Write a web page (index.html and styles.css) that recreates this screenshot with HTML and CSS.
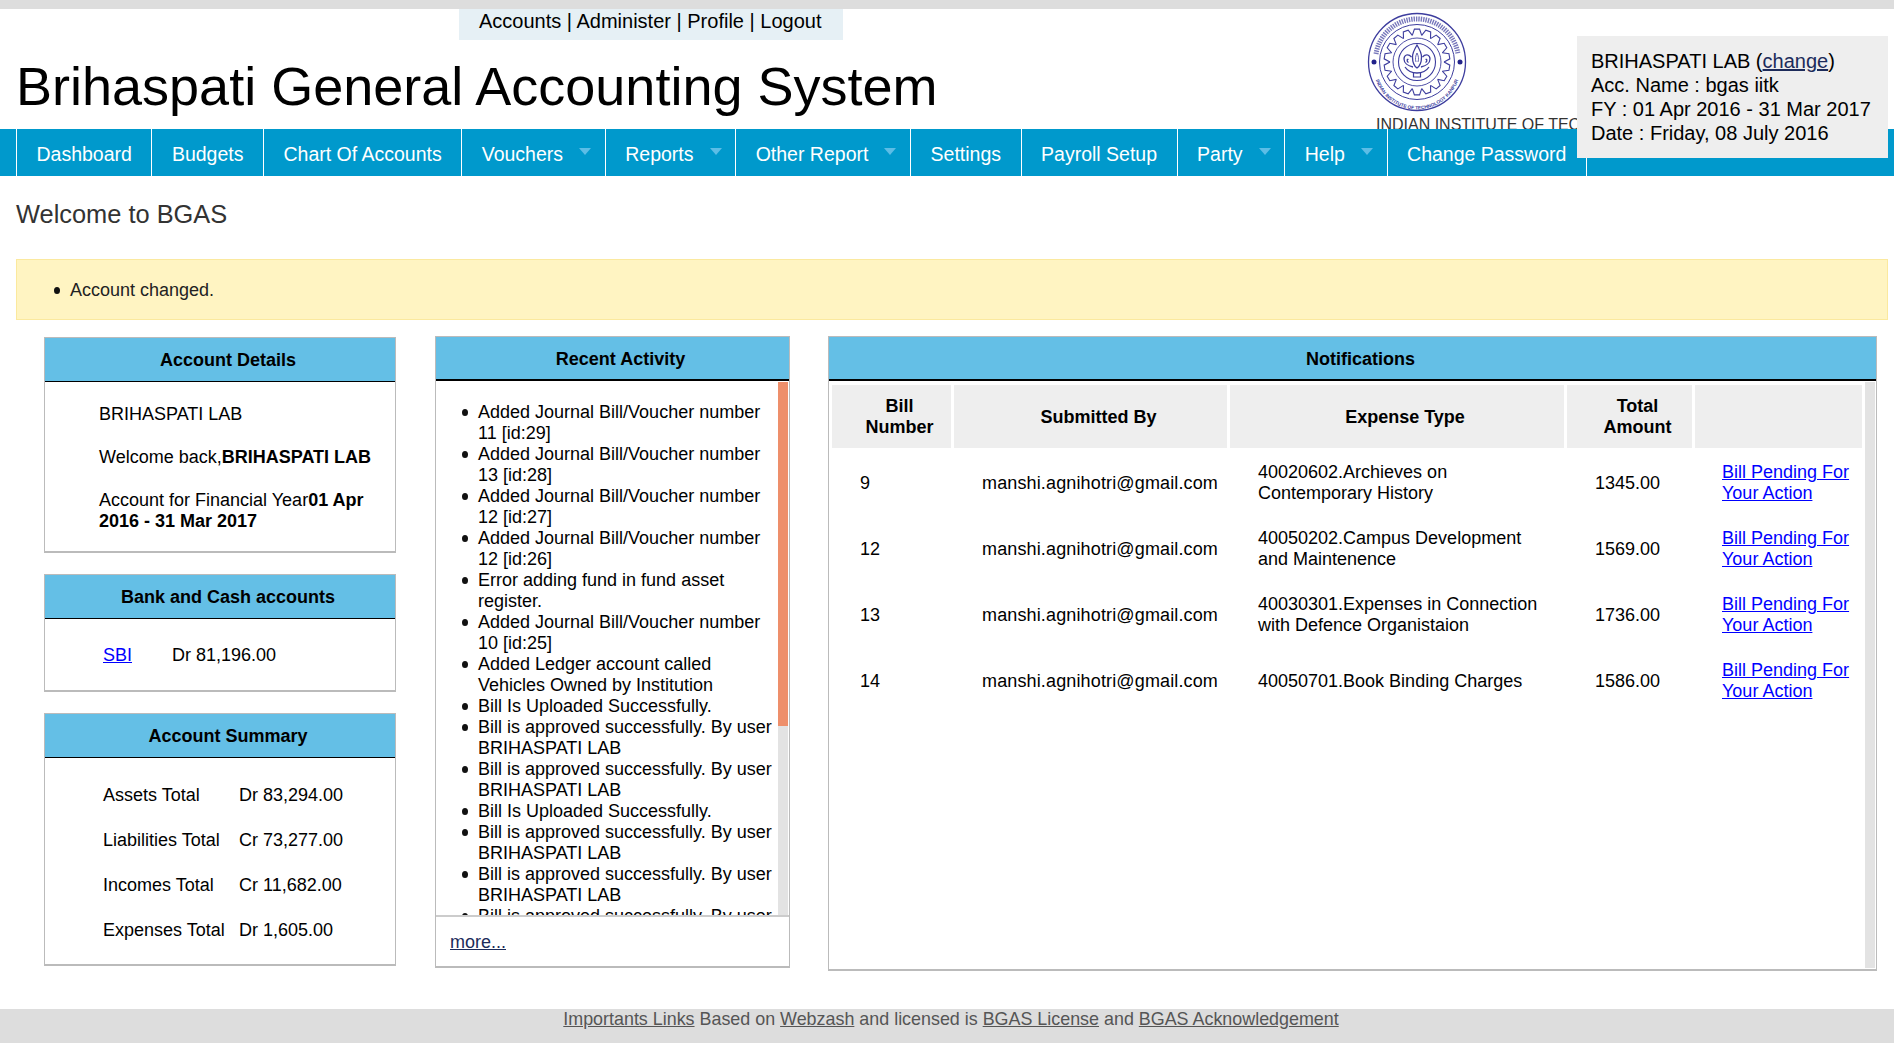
FILE: index.html
```html
<!DOCTYPE html>
<html lang="en">
<head>
  <meta charset="UTF-8" />
  <title>Brihaspati General Accounting System</title>
  <link rel="stylesheet" href="styles.css">
</head>
<body>
  <header class="site-header">
    <div class="brand">
      <div class="top-links">
        <a href="#">Accounts</a> | <a href="#">Administer</a> | <a href="#">Profile</a> | <a href="#">Logout</a>
      </div>
      <h1>Brihaspati General Accounting System</h1>
    </div>
    <div class="institute">
      <svg class="logo" width="100" height="100" viewBox="0 0 100 100" role="img" aria-label="IIT Kanpur logo">
        <defs>
          <path id="ringBottom" d="M6.500 54 A43.500 43.500 0 0 0 93.500 54" />
          <path id="gearTooth" d="M45.310 23.410 L47.410 17.100 L52.590 17.100 L54.690 23.410" />
        </defs>
        <g fill="none" stroke="#3d3d9e">
          <circle cx="50" cy="50" r="48.500" stroke-width="1.300" />
          <circle cx="50" cy="50" r="37.500" stroke-width="1" />
          <path d="M9 42 A41.500 41.500 0 0 1 91 42" stroke-width="5" stroke-dasharray="1.400 1" opacity="0.7" />
          <g stroke-width="1.100">
            <use href="#gearTooth" />
            <use href="#gearTooth" transform="rotate(20 50 50)" />
            <use href="#gearTooth" transform="rotate(40 50 50)" />
            <use href="#gearTooth" transform="rotate(60 50 50)" />
            <use href="#gearTooth" transform="rotate(80 50 50)" />
            <use href="#gearTooth" transform="rotate(100 50 50)" />
            <use href="#gearTooth" transform="rotate(120 50 50)" />
            <use href="#gearTooth" transform="rotate(140 50 50)" />
            <use href="#gearTooth" transform="rotate(160 50 50)" />
            <use href="#gearTooth" transform="rotate(180 50 50)" />
            <use href="#gearTooth" transform="rotate(200 50 50)" />
            <use href="#gearTooth" transform="rotate(220 50 50)" />
            <use href="#gearTooth" transform="rotate(240 50 50)" />
            <use href="#gearTooth" transform="rotate(260 50 50)" />
            <use href="#gearTooth" transform="rotate(280 50 50)" />
            <use href="#gearTooth" transform="rotate(300 50 50)" />
            <use href="#gearTooth" transform="rotate(320 50 50)" />
            <use href="#gearTooth" transform="rotate(340 50 50)" />
          </g>
          <circle cx="50" cy="50" r="24" stroke-width="0.900" />
          <circle cx="50" cy="50" r="18.500" stroke-width="1.100" />
          <path d="M50 33 C47 38 45.500 41 45.500 45 C45.500 50 47 54 50 56 C53 54 54.500 50 54.500 45 C54.500 41 53 38 50 33 Z" stroke-width="1.300" />
          <path d="M50 41 C48.500 44 48 47 49 50 M50 41 C51.500 44 52 47 51 50" stroke-width="0.800" />
          <path d="M44.500 45 C41 41 37 43 37 47 C37 51 41 54 46 55 M41.500 47.500 C40 46.500 39.500 49.500 41.500 50.500 M55.500 45 C59 41 63 43 63 47 C63 51 59 54 54 55 M58.500 47.500 C60 46.500 60.500 49.500 58.500 50.500" stroke-width="1.300" />
          <path d="M38 55 C41 59.500 45 61 50 61 C55 61 59 59.500 62 55" stroke-width="1.300" />
          <path d="M46.500 61 L46.500 65 L53.500 65 L53.500 61" stroke-width="1.200" />
        </g>
        <circle cx="7" cy="50" r="2.500" fill="#22228a" />
        <circle cx="93" cy="50" r="2.500" fill="#22228a" />
        <text class="logo-ring-text"><textPath href="#ringBottom" startOffset="50%" text-anchor="middle">INDIAN INSTITUTE OF TECHNOLOGY KANPUR</textPath></text>
      </svg>
      <div class="institute-name">INDIAN INSTITUTE OF TECHNOLOGY KANPUR</div>
    </div>
    <div class="account-box">
      BRIHASPATI LAB (<a href="#">change</a>)<br>
      Acc. Name : bgas iitk<br>
      FY : 01 Apr 2016 - 31 Mar 2017<br>
      Date : Friday, 08 July 2016
    </div>
  </header>

  <nav class="main-nav">
    <a href="#">Dashboard</a>
    <a href="#">Budgets</a>
    <a href="#">Chart Of Accounts</a>
    <a href="#" class="has-menu">Vouchers</a>
    <a href="#" class="has-menu">Reports</a>
    <a href="#" class="has-menu">Other Report</a>
    <a href="#">Settings</a>
    <a href="#">Payroll Setup</a>
    <a href="#" class="has-menu">Party</a>
    <a href="#" class="has-menu">Help</a>
    <a href="#">Change Password</a>
  </nav>

  <main class="content">
    <h2 class="page-title">Welcome to BGAS</h2>

    <div class="alert">
      <ul><li>Account changed.</li></ul>
    </div>

    <div class="dashboard">
      <div class="left-col">
        <section class="panel details-panel">
          <h3>Account Details</h3>
          <div class="panel-body">
            <p>BRIHASPATI LAB</p>
            <p>Welcome back,<b>BRIHASPATI LAB</b></p>
            <p>Account for Financial Year<b>01 Apr 2016 - 31 Mar 2017</b></p>
          </div>
        </section>

        <section class="panel bank-panel">
          <h3>Bank and Cash accounts</h3>
          <table class="plain-table">
            <tr><td class="bank-name"><a href="#">SBI</a></td><td>Dr 81,196.00</td></tr>
          </table>
        </section>

        <section class="panel summary-panel">
          <h3>Account Summary</h3>
          <table class="plain-table">
            <tr><td>Assets Total</td><td>Dr 83,294.00</td></tr>
            <tr><td>Liabilities Total</td><td>Cr 73,277.00</td></tr>
            <tr><td>Incomes Total</td><td>Cr 11,682.00</td></tr>
            <tr><td>Expenses Total</td><td>Dr 1,605.00</td></tr>
          </table>
        </section>
      </div>

      <section class="panel activity-panel">
        <h3>Recent Activity</h3>
        <div class="activity-scroll">
          <ul>
            <li>Added Journal Bill/Voucher number 11 [id:29]</li>
            <li>Added Journal Bill/Voucher number 13 [id:28]</li>
            <li>Added Journal Bill/Voucher number 12 [id:27]</li>
            <li>Added Journal Bill/Voucher number 12 [id:26]</li>
            <li>Error adding fund in fund asset register.</li>
            <li>Added Journal Bill/Voucher number 10 [id:25]</li>
            <li>Added Ledger account called Vehicles Owned by Institution</li>
            <li>Bill Is Uploaded Successfully.</li>
            <li>Bill is approved successfully. By user BRIHASPATI LAB</li>
            <li>Bill is approved successfully. By user BRIHASPATI LAB</li>
            <li>Bill Is Uploaded Successfully.</li>
            <li>Bill is approved successfully. By user BRIHASPATI LAB</li>
            <li>Bill is approved successfully. By user BRIHASPATI LAB</li>
            <li>Bill is approved successfully. By user BRIHASPATI LAB</li>
          </ul>
          <div class="scroll-track"><div class="scroll-thumb"></div></div>
        </div>
        <div class="more-link"><a href="#">more...</a></div>
      </section>

      <section class="panel notify-panel">
        <h3>Notifications</h3>
        <div class="notify-scroll">
          <table class="notify-table">
            <thead>
              <tr>
                <th class="col-bill">Bill Number</th>
                <th class="col-user">Submitted By</th>
                <th class="col-type">Expense Type</th>
                <th class="col-total">Total Amount</th>
                <th class="col-action"></th>
              </tr>
            </thead>
            <tbody>
              <tr>
                <td>9</td>
                <td class="email">manshi.agnihotri@gmail.com</td>
                <td>40020602.Archieves on Contemporary History</td>
                <td>1345.00</td>
                <td><a href="#">Bill Pending For Your Action</a></td>
              </tr>
              <tr>
                <td>12</td>
                <td class="email">manshi.agnihotri@gmail.com</td>
                <td>40050202.Campus Development and Maintenence</td>
                <td>1569.00</td>
                <td><a href="#">Bill Pending For Your Action</a></td>
              </tr>
              <tr>
                <td>13</td>
                <td class="email">manshi.agnihotri@gmail.com</td>
                <td>40030301.Expenses in Connection with Defence Organistaion</td>
                <td>1736.00</td>
                <td><a href="#">Bill Pending For Your Action</a></td>
              </tr>
              <tr>
                <td>14</td>
                <td class="email">manshi.agnihotri@gmail.com</td>
                <td>40050701.Book Binding Charges</td>
                <td>1586.00</td>
                <td><a href="#">Bill Pending For Your Action</a></td>
              </tr>
            </tbody>
          </table>
          <div class="scroll-track"></div>
        </div>
      </section>
    </div>
  </main>

  <footer class="site-footer">
    <a href="#">Importants Links</a> Based on <a href="#">Webzash</a> and licensed is <a href="#">BGAS License</a> and <a href="#">BGAS Acknowledgement</a>
  </footer>
</body>
</html>
```

FILE: styles.css
```css
* {
  box-sizing: border-box;
}

html, body {
  height: 100%;
}

body {
  margin: 0;
  min-height: 1043px;
  overflow: hidden;
  display: flex;
  flex-direction: column;
  border-top: 9px solid #ddd;
  background: #fff;
  color: #000;
  font-family: "Liberation Sans", Arial, sans-serif;
  font-size: 18px;
  line-height: 21px;
}

a {
  color: #00f;
}

li {
  position: relative;
  list-style: none;
}

li::before {
  content: "";
  position: absolute;
  top: 7px;
  left: -16px;
  width: 6px;
  height: 7px;
  border-radius: 50%;
  background: #111;
}

/* Header */
.site-header {
  position: relative;
  display: flex;
  height: 120px;
}

.brand {
  flex: 1;
}

.top-links {
  width: 384px;
  height: 31px;
  margin-left: 459px;
  padding: 0 20px;
  background: #e6f0f5;
  font-size: 20px;
  line-height: 24px;
  white-space: nowrap;
}

.top-links a {
  color: #000;
  text-decoration: none;
}

.brand h1 {
  margin: 0;
  padding: 14px 0 0 16px;
  font-size: 54px;
  font-weight: normal;
  line-height: 64px;
  white-space: nowrap;
}

.institute {
  width: 529px;
  height: 120px;
  padding-top: 3px;
  overflow: hidden;
}

.logo {
  display: block;
  margin-left: 2px;
}

.logo-ring-text {
  font-family: "Liberation Sans", Arial, sans-serif;
  font-size: 4.800px;
  font-weight: bold;
  fill: #3d3d9e;
}

.institute-name {
  margin: 4px 0 0 11px;
  color: #333;
  font-size: 16px;
  line-height: 18px;
  white-space: nowrap;
}

.account-box {
  position: absolute;
  top: 27px;
  right: 6px;
  z-index: 2;
  width: 311px;
  height: 122px;
  padding: 13px 14px 0;
  background: #eee;
  font-size: 20px;
  line-height: 24px;
  white-space: nowrap;
}

.account-box a {
  color: #1c2b5a;
}

/* Nav bar */
.main-nav {
  display: flex;
  height: 47px;
  padding-left: 16px;
  background: #09c;
}

.main-nav a {
  display: flex;
  padding: 2px 19.500px 0;
  border-left: 1px solid #fff;
  color: #fff;
  font-size: 19.500px;
  line-height: 47px;
  text-decoration: none;
  white-space: nowrap;
}

.main-nav a:last-child {
  border-right: 1px solid #fff;
}

.main-nav a.has-menu {
  padding-right: 13.700px;
}

.main-nav a.has-menu::after {
  content: "";
  width: 0;
  height: 0;
  margin: 17px 0 0 16px;
  border: 6px solid transparent;
  border-top: 7px solid #5cbde6;
  border-bottom: 0;
}

/* Page content */
.content {
  flex: 1;
  padding: 0 6px 0 16px;
}

.page-title {
  margin: 0;
  padding-top: 22px;
  color: #333;
  font-size: 25.400px;
  font-weight: normal;
  line-height: 32px;
}

.alert {
  height: 61px;
  margin-top: 29px;
  border: 1px solid #fbe99e;
  background: #fff4c2;
  color: #222;
  font-size: 18px;
}

.alert ul {
  margin: 0;
  padding: 20px 0 0 53px;
}

.dashboard {
  display: flex;
  align-items: flex-start;
  margin-top: 16px;
  padding-left: 28px;
}

.left-col {
  display: flex;
  flex-direction: column;
  gap: 21px;
  width: 352px;
  margin-top: 1px;
}

.panel {
  border: 1px solid #bbb;
  border-bottom-width: 2px;
}

.panel h3 {
  margin: 0;
  height: 44px;
  padding-left: 16px;
  border-bottom: 1px solid #000;
  background: #64bfe6;
  font-size: 18px;
  line-height: 44px;
  text-align: center;
}

.details-panel {
  height: 216px;
}

.panel-body {
  padding: 11px 18px 0 54px;
}

.panel-body p {
  margin: 11px 0 22px;
}

.plain-table {
  border-collapse: collapse;
}

.plain-table td {
  padding: 0;
}

.bank-panel {
  height: 118px;
}

.bank-panel .plain-table {
  margin: 26px 0 0 58px;
}

.bank-name {
  width: 69px;
}

.summary-panel {
  height: 253px;
}

.summary-panel .plain-table {
  margin: 15px 0 0 58px;
}

.summary-panel td {
  height: 45px;
}

.summary-panel td:first-child {
  width: 136px;
}

.activity-panel {
  width: 355px;
  height: 632px;
  margin-left: 39px;
}

.activity-panel h3,
.notify-panel h3 {
  border-bottom-width: 2px;
}

/* headless chrome hides real scrollbars, so the tracks are plain divs */
.activity-scroll {
  display: flex;
  height: 536px;
  border-bottom: 2px solid #ccc;
}

.activity-scroll ul {
  flex: 1;
  margin: 0;
  padding: 21px 0 0 42px;
  overflow: hidden;
}

.scroll-track {
  flex: none;
  width: 10px;
  margin: 1px 1px 0 0;
  background: #e3e3e3;
}

.scroll-thumb {
  height: 344px;
  background: #ee8f6b;
}

.more-link {
  padding: 15px 14px;
}

.more-link a {
  color: #1c2b5a;
}

.notify-panel {
  width: 1049px;
  height: 635px;
  margin-left: 38px;
}

.notify-scroll {
  display: flex;
  justify-content: space-between;
  height: 588px;
  padding-bottom: 1px;
}

.notify-table {
  width: 1036px;
  height: 0;
  margin-top: 1px;
  border-spacing: 3px;
  table-layout: fixed;
}

.notify-table th {
  height: 63px;
  padding: 1px 12px 0 28px;
  background: #eee;
}

.notify-table td {
  height: 63px;
  padding: 1px 10px 0 28px;
  vertical-align: middle;
}

.notify-table td:last-child {
  padding-left: 27px;
}

.notify-table .email {
  letter-spacing: 0.140px;
  white-space: nowrap;
}

.col-bill {
  width: 119px;
}

.col-user {
  width: 273px;
}

.col-type {
  width: 334px;
}

.col-total {
  width: 125px;
}

/* Footer */
.site-footer {
  height: 34px;
  padding-left: 8px;
  background: #ddd;
  color: #555;
  font-size: 17.900px;
  line-height: 20px;
  text-align: center;
}

.site-footer a {
  color: #555;
}
```
